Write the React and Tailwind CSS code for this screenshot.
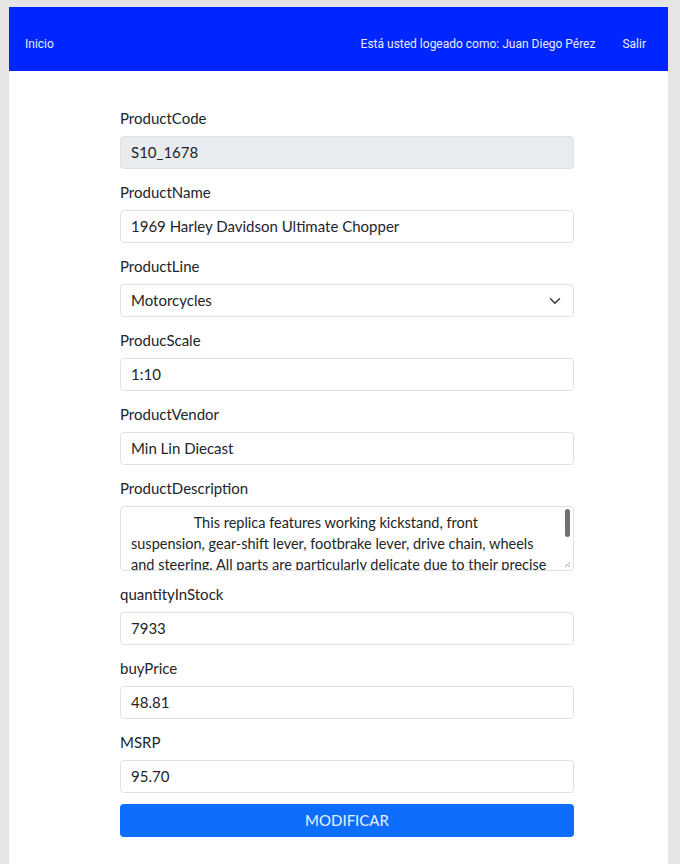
import React from "react";

const inputCls =
  "h-[33px] w-full rounded-[4px] border border-[#dee2e6] bg-white px-[10px] flex items-center text-[15px] text-[#212529]";

function Field({ label, children }) {
  return (
    <div className="mb-[11px]">
      <div className="h-[24px] leading-[24px] text-[15px] text-[#212529] mb-[6px]">{label}</div>
      {children}
    </div>
  );
}

export default function App() {
  const desc =
    "\u00a0".repeat(17) +
    "This replica features working kickstand, front suspension, gear-shift lever, footbrake lever, drive chain, wheels and steering. All parts are particularly delicate due to their precise scale and require special care and attention.";
  return (
    <div className="min-h-[864px] bg-[#e5e5e5] pt-[7px] pl-[9px] pr-[12px] font-['Lato',sans-serif]">
      <div className="bg-white min-h-[857px]">
        <nav className="h-[64px] bg-[#0026ff] flex items-center pt-[10px] px-[16px] font-['Roboto',sans-serif] text-[12px] text-[#e8ebff]">
          <span>Inicio</span>
          <span className="ml-auto">Está usted logeado como: Juan Diego Pérez</span>
          <span className="ml-[27px] mr-[6px]">Salir</span>
        </nav>
        <div className="pt-[35px] pl-[111px] w-[565px]">
          <Field label="ProductCode">
            <div className={inputCls + " !bg-[#e9ecef]"}>S10_1678</div>
          </Field>
          <Field label="ProductName">
            <div className={inputCls}>1969 Harley Davidson Ultimate Chopper</div>
          </Field>
          <Field label="ProductLine">
            <div className={inputCls + " justify-between"}>
              <span>Motorcycles</span>
              <svg width="12" height="12" viewBox="0 0 16 16" className="mr-[2px]">
                <path d="M2 5l6 6 6-6" fill="none" stroke="#343a40" strokeWidth="2" strokeLinecap="round" strokeLinejoin="round" />
              </svg>
            </div>
          </Field>
          <Field label="ProducScale">
            <div className={inputCls}>1:10</div>
          </Field>
          <Field label="ProductVendor">
            <div className={inputCls}>Min Lin Diecast</div>
          </Field>
          <Field label="ProductDescription">
            <div className="relative h-[65px] w-full rounded-[4px] border border-[#dee2e6] bg-white overflow-hidden">
              <div className="pl-[10px] pr-[23px] pt-[5px] text-[14.5px] leading-[21px] text-[#212529]">{desc}</div>
              <div className="absolute right-[3px] top-[2px] w-[5px] h-[28px] rounded-[3px] bg-[#707070]"></div>
              <svg className="absolute right-[2px] bottom-[2px]" width="7" height="7" viewBox="0 0 7 7">
                <path d="M6 1L1 6M6 4L4 6" stroke="#aaa" strokeWidth="1" />
              </svg>
            </div>
          </Field>
          <Field label="quantityInStock">
            <div className={inputCls}>7933</div>
          </Field>
          <Field label="buyPrice">
            <div className={inputCls}>48.81</div>
          </Field>
          <Field label="MSRP">
            <div className={inputCls}>95.70</div>
          </Field>
          <button className="mt-[5px] h-[33px] w-full rounded-[4px] bg-[#0d6efd] text-[#e8f0ff] text-[15px] flex items-center justify-center">
            MODIFICAR
          </button>
        </div>
      </div>
    </div>
  );
}
